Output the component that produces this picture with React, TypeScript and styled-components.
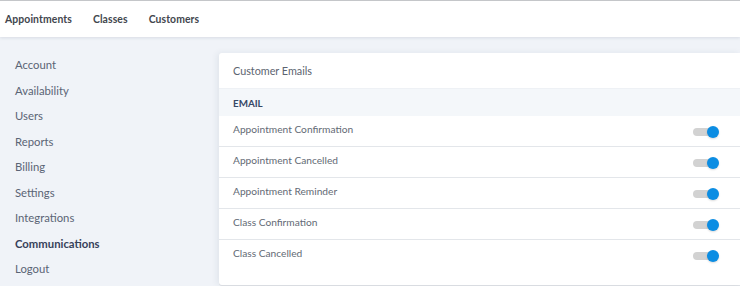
import styled, { createGlobalStyle } from "styled-components";

const GlobalStyle = createGlobalStyle`
  html, body {
    margin: 0;
    padding: 0;
    background: #f0f3f8;
    font-family: "Lato", "Open Sans", sans-serif;
  }
`;

const Page = styled.div`
  width: 740px;
  height: 286px;
  overflow: hidden;
  border-top: 1px solid #c4c6c9;
  box-sizing: border-box;
`;

const TopBar = styled.header`
  display: flex;
  align-items: center;
  gap: 21px;
  height: 36px;
  padding-left: 5px;
  background: #fff;
  box-shadow: 0 1px 3px rgba(40, 60, 90, 0.12);
  position: relative;
  z-index: 1;
`;

const NavLink = styled.a`
  font-size: 10.4px;
  font-weight: 700;
  color: #42464d;
  text-decoration: none;
  letter-spacing: 0.1px;
`;

const Body = styled.div`
  display: grid;
  grid-template-columns: 219px 1fr;
  padding-top: 16px;
`;

const Sidebar = styled.nav`
  display: flex;
  flex-direction: column;
  padding-left: 15px;
  margin-top: -1px;
`;

const SideItem = styled.a<{ $active?: boolean }>`
  height: 25.5px;
  line-height: 25.5px;
  font-size: 11.3px;
  font-weight: ${(p) => (p.$active ? 700 : 400)};
  color: ${(p) => (p.$active ? "#36415a" : "#5a6475")};
`;

const Card = styled.section`
  background: #fff;
  border-radius: 3px 0 0 3px;
  box-shadow: -2px 0 6px rgba(40, 60, 90, 0.08), 0 1px 0 #dfe2e6;
  height: 232px;
`;

const CardTitle = styled.div`
  height: 35px;
  display: flex;
  align-items: center;
  padding-left: 14px;
  font-size: 10.8px;
  color: #5c6470;
`;

const Section = styled.div`
  height: 28px;
  display: flex;
  align-items: center;
  padding-left: 14px;
  background: #f4f7fa;
  font-size: 9.8px;
  font-weight: 700;
  color: #364866;
  border-top: 1px solid #eef1f5;
  box-sizing: border-box;
`;

const Row = styled.div<{ $last?: boolean }>`
  display: flex;
  justify-content: space-between;
  align-items: flex-start;
  height: ${(p) => (p.$last ? "44px" : "31px")};
  padding: 7px 21px 0 14px;
  box-sizing: border-box;
  border-bottom: ${(p) => (p.$last ? "none" : "1px solid #e3e6ea")};
  font-size: 10.2px;
  line-height: 13px;
  color: #636a75;
`;

const Toggle = styled.span`
  position: relative;
  width: 26px;
  height: 12px;
  margin-top: 3px;
  display: inline-flex;
  align-items: center;
`;

const Track = styled.span`
  width: 20px;
  height: 8px;
  border-radius: 4px;
  background: #d2d2d2;
`;

const Thumb = styled.span`
  position: absolute;
  right: 0;
  top: 0;
  width: 12px;
  height: 12px;
  border-radius: 50%;
  background: #0b8de3;
  box-shadow: 0 1px 2px rgba(0, 0, 0, 0.15);
`;

const navItems = ["Appointments", "Classes", "Customers"];
const sideItems = [
  "Account",
  "Availability",
  "Users",
  "Reports",
  "Billing",
  "Settings",
  "Integrations",
  "Communications",
  "Logout",
];
const emails = [
  "Appointment Confirmation",
  "Appointment Cancelled",
  "Appointment Reminder",
  "Class Confirmation",
  "Class Cancelled",
];

export default function App() {
  return (
    <Page>
      <GlobalStyle />
      <TopBar>
        {navItems.map((n) => (
          <NavLink key={n}>{n}</NavLink>
        ))}
      </TopBar>
      <Body>
        <Sidebar>
          {sideItems.map((s) => (
            <SideItem key={s} $active={s === "Communications"}>
              {s}
            </SideItem>
          ))}
        </Sidebar>
        <Card>
          <CardTitle>Customer Emails</CardTitle>
          <Section>EMAIL</Section>
          {emails.map((e, i) => (
            <Row key={e} $last={i === emails.length - 1}>
              {e}
              <Toggle>
                <Track />
                <Thumb />
              </Toggle>
            </Row>
          ))}
        </Card>
      </Body>
    </Page>
  );
}
